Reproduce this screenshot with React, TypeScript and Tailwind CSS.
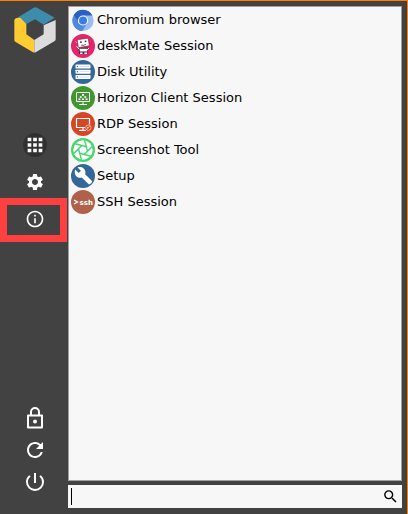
import type { ReactNode } from 'react'
import { MdApps, MdInfoOutline, MdPowerSettingsNew, MdRefresh, MdSearch, MdSettings } from 'react-icons/md'

function Badge({ color, children }: { color: string; children: ReactNode }) {
  return (
    <svg viewBox="0 0 24 24" className="size-6 shrink-0" aria-hidden="true">
      <circle cx="12" cy="12" r="12" fill={color} />
      {children}
    </svg>
  )
}

function ChromiumIcon() {
  return (
    <svg viewBox="0 0 24 24" className="size-6 shrink-0" aria-hidden="true">
      <circle cx="12" cy="12.5" r="10.6" fill="#99bcf2" />
      <path d="M2.8 7.2A10.6 10.6 0 0 0 11.2 23.1L16.4 14.8 12 12.5 7.6 15Z" fill="#5088e0" />
      <path d="M2.8 7.2A10.6 10.6 0 0 1 21.4 7.5H12L7.6 15Z" fill="#2a5fc4" />
      <circle cx="12" cy="12.5" r="5.1" fill="#fff" />
      <circle cx="12" cy="12.5" r="4" fill="#3a7be8" />
    </svg>
  )
}

function DeskMateIcon() {
  return (
    <Badge color="#e5246b">
      <path d="M7.5 14.2 8.2 20h8l.4-6.5" fill="#3c2734" />
      <path d="M8.6 14.8h7.4v2.6H8.8zM9 18.6h2.6V20H9zM13.4 18.6H16V20h-2.6z" fill="#fff" />
      <path d="m6.3 5.8 10.9-1.6 1.1 7.6L7.4 13.6Z" fill="#fff" stroke="#3c2734" strokeWidth="0.5" />
      <path d="m9 7.4 1.6-.2.2 1.5-1.6.2zM13.6 6.7l1.6-.2.2 1.5-1.6.2z" fill="#3c2734" />
      <path d="M10.2 11.2q2.4.6 4.6-.8" fill="none" stroke="#3c2734" strokeWidth="0.8" />
      <path d="m5.5 8.5-.8-1M5.6 12.2l2.6 3M18 14l-2 2" stroke="#fff" strokeWidth="1" />
    </Badge>
  )
}

function DiskIcon() {
  return (
    <Badge color="#336699">
      {[5, 10.2, 15.4].map(y => (
        <g key={y}>
          <rect x="4.5" y={y - 0.5} width="15" height="4" rx="0.6" fill="#fff" />
          <circle cx="6.4" cy={y + 1.5} r="0.7" fill="#336699" />
          <path d={`M8.5 ${y + 1.5}h9.5`} stroke="#336699" strokeWidth="0.5" opacity="0.4" />
        </g>
      ))}
    </Badge>
  )
}

function HorizonIcon() {
  return (
    <Badge color="#41962f">
      <path d="M5.5 6.5h13v9h-13zM12 15.5V18M8 18.5h8" fill="none" stroke="#fff" strokeWidth="1" />
      <path d="M11 8h2v1.8h-2zM8.8 10.3h2v1.5h-2zM13.2 10.3h2v1.5h-2zM7.4 12.5h2V14h-2zM11 12.5h2V14h-2zM14.6 12.5h2V14h-2z" fill="#fff" />
    </Badge>
  )
}

function RdpIcon() {
  return (
    <Badge color="#d34727">
      <path d="M5.5 6.5h13v9h-13zM12 15.5v2.5M8 18.3h7" fill="none" stroke="#fff" strokeWidth="1.2" />
      <circle cx="17.3" cy="15.7" r="3.5" fill="#d34727" />
      <circle cx="17.3" cy="15.7" r="2.7" fill="#d34727" stroke="#f6cfc4" strokeWidth="0.8" />
      <path d="m15.8 17 3-2.8M16 15l1.2 1.2" stroke="#f6cfc4" strokeWidth="0.8" />
    </Badge>
  )
}

function ShutterIcon() {
  return (
    <Badge color="#45d66f">
      <circle cx="12" cy="12" r="9.7" fill="#fff" />
      {[0, 60, 120, 180, 240, 300].map(deg => (
        <path key={deg} d="M14.3 8H2.9" transform={`rotate(${deg + 15} 12 12)`} stroke="#45d66f" strokeWidth="1.4" />
      ))}
    </Badge>
  )
}

function WrenchIcon() {
  return (
    <Badge color="#336699">
      <path d="M4.2 5.6 7.7 9l2.2-2.2L6.5 3.6c2.5-1 5-.4 6.6 1.3 1.4 1.5 1.7 3.5 1.1 5.4l6.3 6.2c.7.7.7 1.6 0 2.3l-1 1c-.7.7-1.6.7-2.3 0l-6.4-6.3c-1.9.6-4 .2-5.5-1.3-1.7-1.8-2-4.3-1.1-6.6Z" fill="#fff" />
    </Badge>
  )
}

function SshIcon() {
  return (
    <Badge color="#b0614a">
      <path d="m3 10 3.5 2L3 14" fill="none" stroke="#fff" strokeWidth="1.3" />
      <text x="8.6" y="14.6" fill="#fff" fontSize="7" fontWeight="bold" fontFamily="DejaVu Sans, sans-serif">ssh</text>
    </Badge>
  )
}

function Logo() {
  return (
    <svg viewBox="42 21 126 138" className="h-[46px] w-[42px]" role="img" aria-label="Start menu">
      <path d="m52 53 49-30q5-3 10 0l53 30-33 21-26-16-26 14Z" fill="#3c8dab" />
      <path d="M43 60q1-5 7-6l11-1 18 19v31l24 17v36q0 3-4 1l-52-31q-4-2-4-6Z" fill="#ffcb33" />
      <path d="m167 60v58q0 4-4 6l-56 33q-4 2-4-1v-36l28-17V76Z" fill="#dcdcdc" />
    </svg>
  )
}

function LockIcon() {
  return (
    <svg viewBox="0 0 24 24" className="size-6" aria-hidden="true">
      <path d="M5 9.5h14v12H5zM8 9.5V6a4 4 0 0 1 8 0v3.5" fill="none" stroke="currentColor" strokeWidth="2" strokeLinejoin="round" />
      <circle cx="12" cy="15.5" r="2" fill="currentColor" />
    </svg>
  )
}

const apps = [
  { name: 'Chromium browser', icon: <ChromiumIcon /> },
  { name: 'deskMate Session', icon: <DeskMateIcon /> },
  { name: 'Disk Utility', icon: <DiskIcon /> },
  { name: 'Horizon Client Session', icon: <HorizonIcon /> },
  { name: 'RDP Session', icon: <RdpIcon /> },
  { name: 'Screenshot Tool', icon: <ShutterIcon /> },
  { name: 'Setup', icon: <WrenchIcon /> },
  { name: 'SSH Session', icon: <SshIcon /> },
]

export default function App() {
  return (
    <div className="flex min-h-screen border-t border-r border-[#ff8000] bg-[#424242] font-['DejaVu_Sans',sans-serif] text-[13px] text-black">
      <nav className="flex w-[68px] shrink-0 flex-col justify-between pt-1.5 pb-5 text-white">
        <div className="flex flex-col">
          <div className="mb-20 flex justify-center pl-0.5"><Logo /></div>
          <div className="mb-1 flex flex-col items-center gap-[13px] pl-0.5">
            <button aria-label="Applications" className="flex size-6 items-center justify-center rounded-full bg-[#303030]">
              <MdApps size={22} />
            </button>
            <button aria-label="System" className="flex size-6 items-center justify-center">
              <MdSettings size={20} />
            </button>
          </div>
          <button aria-label="About" className="mr-px flex h-11 items-center justify-center border-[7px] border-[#ff4040] pb-0.5 pl-0.5">
            <MdInfoOutline size={20} />
          </button>
        </div>
        <div className="flex flex-col items-center gap-2 pl-0.5">
          <button aria-label="Lock"><LockIcon /></button>
          <button aria-label="Restart"><MdRefresh size={24} /></button>
          <button aria-label="Shut down"><MdPowerSettingsNew size={24} /></button>
        </div>
      </nav>

      <main className="flex min-w-0 flex-1 flex-col gap-1 pt-[5px] pr-[5px] pb-1.5">
        <ul className="flex-1 border border-[#a0a0a0] bg-[#f7f7f7] pl-0.5">
          {apps.map(({ name, icon }) => (
            <li key={name}>
              <button className="flex h-[26px] w-full items-center gap-0.5 text-left whitespace-nowrap">
                {icon}
                <span>{name}</span>
              </button>
            </li>
          ))}
        </ul>
        <div className="flex h-[23px] items-center bg-[#f7f7f7] px-[3px]">
          <span className="h-[17px] w-px bg-black" />
          <input type="text" aria-label="Search" className="h-full min-w-0 flex-1 bg-transparent pl-0.5 outline-none" />
          <button aria-label="Start search"><MdSearch size={17} /></button>
        </div>
      </main>
    </div>
  )
}
